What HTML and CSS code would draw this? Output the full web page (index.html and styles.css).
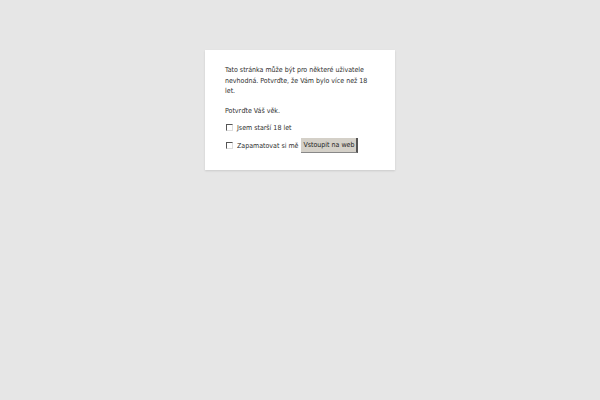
FILE: index.html
```html
<!DOCTYPE html>
<html lang="cs">
<head>
<meta charset="utf-8">
<link rel="stylesheet" href="styles.css">
</head>
<body>
<div class="page">
  <div class="dialog">
    <p class="msg">Tato stránka může být pro některé uživatele nevhodná. Potvrďte, že Vám bylo více než 18 let.</p>
    <p class="ask">Potvrďte Váš věk.</p>
    <label class="row"><span class="check"></span>Jsem starší 18 let</label>
    <div class="row">
      <label class="row-inline"><span class="check"></span>Zapamatovat si mě</label>
      <button class="btn">Vstoupit na web</button>
    </div>
  </div>
</div>
</body>
</html>
```
FILE: styles.css
```css
html, body {
  margin: 0;
  padding: 0;
  background: #e6e6e6;
  width: 600px;
  height: 400px;
  font-family: "DejaVu Sans Condensed", "DejaVu Sans", sans-serif;
  font-stretch: condensed;
  font-size: 7px;
  color: #2e2e2e;
}
.page {
  display: flex;
  justify-content: center;
  padding-top: 50px;
}
.dialog {
  width: 150px;
  background: #fff;
  padding: 15px 20px 16px 20px;
  box-shadow: 0 1px 2px rgba(0,0,0,0.12);
}
.msg {
  margin: 0;
  line-height: 10.6px;
}
.ask {
  margin: 9px 0 4px;
  line-height: 10px;
}
.row {
  display: flex;
  align-items: center;
  height: 16px;
  margin-top: 2px;
}
.row-inline {
  display: flex;
  align-items: center;
}
.check {
  width: 5px;
  height: 5px;
  border-top: 1px solid #555;
  border-left: 1px solid #555;
  border-right: 1px solid #ddd;
  border-bottom: 1px solid #ddd;
  margin: 0 4px 0 1px;
}
.btn {
  font-family: "DejaVu Sans Condensed", "DejaVu Sans", sans-serif;
  font-stretch: condensed;
  font-size: 7px;
  color: #222;
  background: #d4d0c8;
  border: none;
  border-right: 2px solid #555;
  border-bottom: 1px solid #888;
  padding: 2px 2px;
  margin-left: 3px;
  height: 15px;
}
```
